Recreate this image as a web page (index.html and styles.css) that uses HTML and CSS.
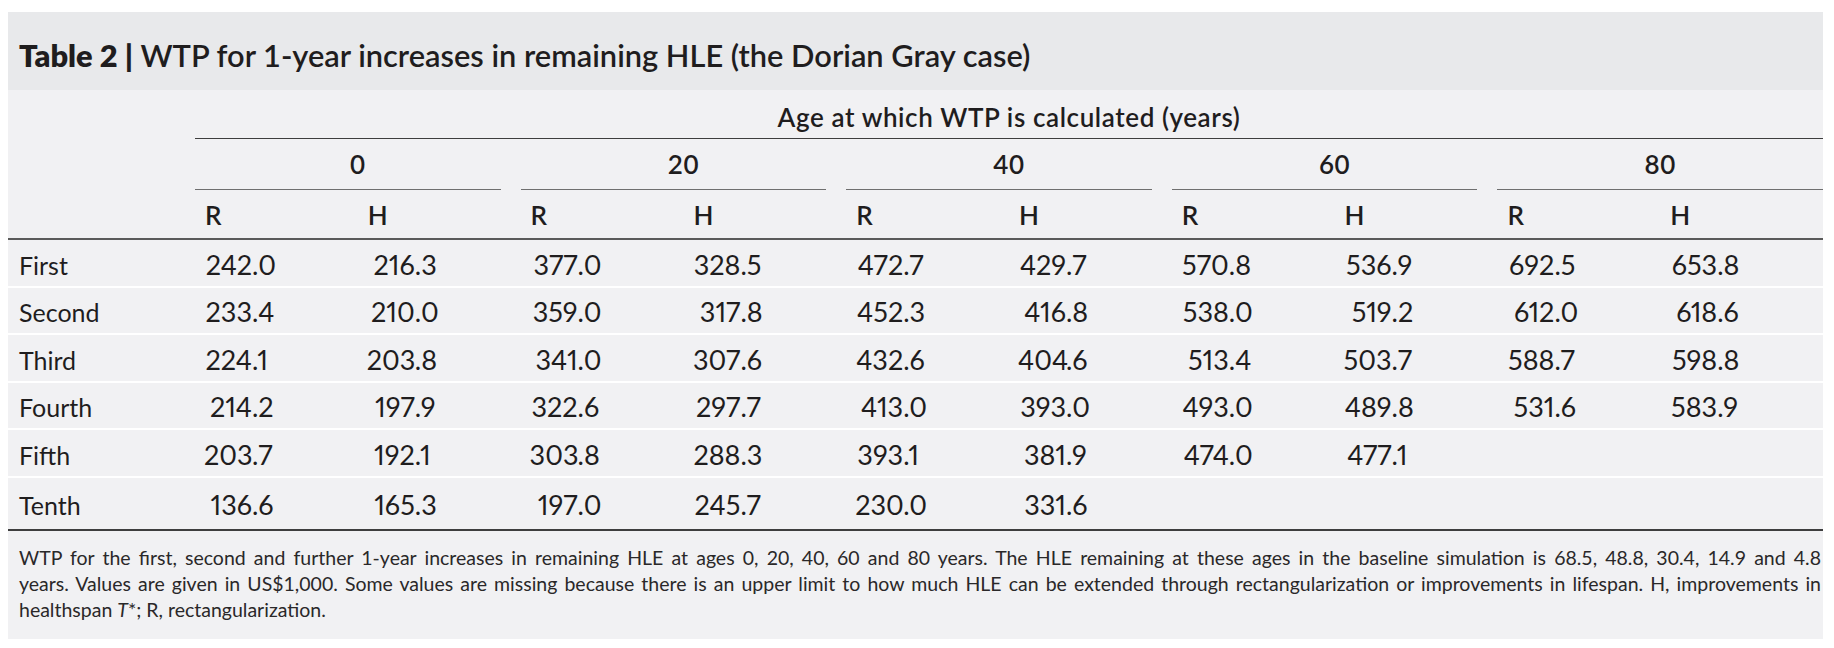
FILE: index.html
```html
<!DOCTYPE html>
<html lang="en">
<head>
<meta charset="utf-8">
<title>Table 2</title>
<link rel="stylesheet" href="styles.css">
</head>
<body>
<div class="card">
  <div class="title"><span class="title-num">Table 2 |</span> WTP for 1-year increases in remaining HLE (the Dorian Gray case)</div>

  <div class="head">
    <div class="corner"></div>
    <div class="age">Age at which WTP is calculated (years)</div>
    <div class="group"><span class="glabel">0</span><span class="grule"></span></div>
    <div class="group"><span class="glabel">20</span><span class="grule"></span></div>
    <div class="group"><span class="glabel">40</span><span class="grule"></span></div>
    <div class="group"><span class="glabel">60</span><span class="grule"></span></div>
    <div class="group last"><span class="glabel">80</span><span class="grule"></span></div>
    <div class="sub">R</div><div class="sub">H</div>
    <div class="sub">R</div><div class="sub">H</div>
    <div class="sub">R</div><div class="sub">H</div>
    <div class="sub">R</div><div class="sub">H</div>
    <div class="sub">R</div><div class="sub">H</div>
  </div>

  <div class="body">
    <div class="row">
      <div class="label">First</div>
      <div class="num"><span class="i">242</span>.0</div><div class="num"><span class="i">216</span>.3</div>
      <div class="num"><span class="i">377</span>.0</div><div class="num"><span class="i">328</span>.5</div>
      <div class="num"><span class="i">472</span>.7</div><div class="num"><span class="i">429</span>.7</div>
      <div class="num"><span class="i">570</span>.8</div><div class="num"><span class="i">536</span>.9</div>
      <div class="num"><span class="i">692</span>.5</div><div class="num"><span class="i">653</span>.8</div>
    </div>
    <div class="row">
      <div class="label">Second</div>
      <div class="num"><span class="i">233</span>.4</div><div class="num"><span class="i">210</span>.0</div>
      <div class="num"><span class="i">359</span>.0</div><div class="num"><span class="i">317</span>.8</div>
      <div class="num"><span class="i">452</span>.3</div><div class="num"><span class="i">416</span>.8</div>
      <div class="num"><span class="i">538</span>.0</div><div class="num"><span class="i">519</span>.2</div>
      <div class="num"><span class="i">612</span>.0</div><div class="num"><span class="i">618</span>.6</div>
    </div>
    <div class="row">
      <div class="label">Third</div>
      <div class="num"><span class="i">224</span>.1</div><div class="num"><span class="i">203</span>.8</div>
      <div class="num"><span class="i">341</span>.0</div><div class="num"><span class="i">307</span>.6</div>
      <div class="num"><span class="i">432</span>.6</div><div class="num"><span class="i">404</span>.6</div>
      <div class="num"><span class="i">513</span>.4</div><div class="num"><span class="i">503</span>.7</div>
      <div class="num"><span class="i">588</span>.7</div><div class="num"><span class="i">598</span>.8</div>
    </div>
    <div class="row">
      <div class="label">Fourth</div>
      <div class="num"><span class="i">214</span>.2</div><div class="num"><span class="i">197</span>.9</div>
      <div class="num"><span class="i">322</span>.6</div><div class="num"><span class="i">297</span>.7</div>
      <div class="num"><span class="i">413</span>.0</div><div class="num"><span class="i">393</span>.0</div>
      <div class="num"><span class="i">493</span>.0</div><div class="num"><span class="i">489</span>.8</div>
      <div class="num"><span class="i">531</span>.6</div><div class="num"><span class="i">583</span>.9</div>
    </div>
    <div class="row">
      <div class="label">Fifth</div>
      <div class="num"><span class="i">203</span>.7</div><div class="num"><span class="i">192</span>.1</div>
      <div class="num"><span class="i">303</span>.8</div><div class="num"><span class="i">288</span>.3</div>
      <div class="num"><span class="i">393</span>.1</div><div class="num"><span class="i">381</span>.9</div>
      <div class="num"><span class="i">474</span>.0</div><div class="num"><span class="i">477</span>.1</div>
      <div class="num"></div><div class="num"></div>
    </div>
    <div class="row last">
      <div class="label">Tenth</div>
      <div class="num"><span class="i">136</span>.6</div><div class="num"><span class="i">165</span>.3</div>
      <div class="num"><span class="i">197</span>.0</div><div class="num"><span class="i">245</span>.7</div>
      <div class="num"><span class="i">230</span>.0</div><div class="num"><span class="i">331</span>.6</div>
      <div class="num"></div><div class="num"></div>
      <div class="num"></div><div class="num"></div>
    </div>
  </div>

  <div class="note">
    <span class="line just">WTP for the first, second and further 1-year increases in remaining HLE at ages 0, 20, 40, 60 and 80 years. The HLE remaining at these ages in the baseline simulation is 68.5, 48.8, 30.4, 14.9 and 4.8</span>
    <span class="line just">years. Values are given in US$1,000. Some values are missing because there is an upper limit to how much HLE can be extended through rectangularization or improvements in lifespan. H, improvements in</span>
    <span class="line">healthspan <i>T</i>*; R, rectangularization.</span>
  </div>
</div>
</body>
</html>
```

FILE: styles.css
```css
html, body {
  margin: 0;
  padding: 0;
  background: #ffffff;
}

body {
  font-family: Lato, "Open Sans", "Liberation Sans", sans-serif;
  color: #1f1d1e;
}

.card {
  margin: 12px 11px 0 8px;
  background: #f1f1f3;
}

.title {
  height: 78px;
  box-sizing: border-box;
  padding: 25px 0 0 11px;
  background: #e8e9eb;
  font-size: 30.8px;
  line-height: 37px;
  font-weight: 600;
}

.title-num {
  font-weight: 800;
}

.head,
.row {
  display: grid;
  grid-template-columns: 187px repeat(10, 1fr);
}

.head {
  border-bottom: 2px solid #5a5a5a;
}

.corner {
  grid-column: 1;
  grid-row: 1 / 4;
}

.age,
.glabel,
.sub {
  font-size: 26px;
  line-height: 30px;
  font-weight: 600;
  letter-spacing: 0.6px;
}

.age {
  grid-column: 2 / -1;
  height: 49px;
  box-sizing: border-box;
  padding-top: 12px;
  text-align: center;
  border-bottom: 1.5px solid #3e3e3e;
}

.group {
  grid-column: span 2;
  height: 51px;
  display: flex;
  flex-direction: column;
  justify-content: flex-end;
}

.glabel {
  text-align: center;
  padding-bottom: 10px;
}

.grule {
  display: block;
  height: 0;
  border-bottom: 1.5px solid #6f6f6f;
  margin-right: 20px;
}

.group.last .grule {
  margin-right: 0;
}

.sub {
  height: 48px;
  box-sizing: border-box;
  padding: 10px 0 0 10px;
}

.body {
  display: flex;
  flex-direction: column;
  gap: 2px;
  background: #ffffff;
  border-bottom: 2px solid #3e3e3e;
}

.row {
  height: 45.5px;
  align-items: center;
  background: #f1f1f3;
  font-size: 25px;
  line-height: 30px;
}

.row.last {
  height: 51.5px;
}

.label {
  padding-left: 11px;
  padding-top: 4px;
}

.num {
  padding-left: 9px;
  padding-top: 4px;
  white-space: nowrap;
  font-size: 27px;
  font-variant-numeric: proportional-nums;
}

.i {
  display: inline-block;
  width: 48px;
  text-align: right;
}

.note {
  box-sizing: border-box;
  height: 108px;
  padding: 14px 2px 0 11px;
  font-size: 19.5px;
  line-height: 26px;
  color: #2a2829;
}

.line {
  display: block;
  white-space: nowrap;
}

.line.just {
  white-space: normal;
  text-align: justify;
  text-align-last: justify;
}
```
